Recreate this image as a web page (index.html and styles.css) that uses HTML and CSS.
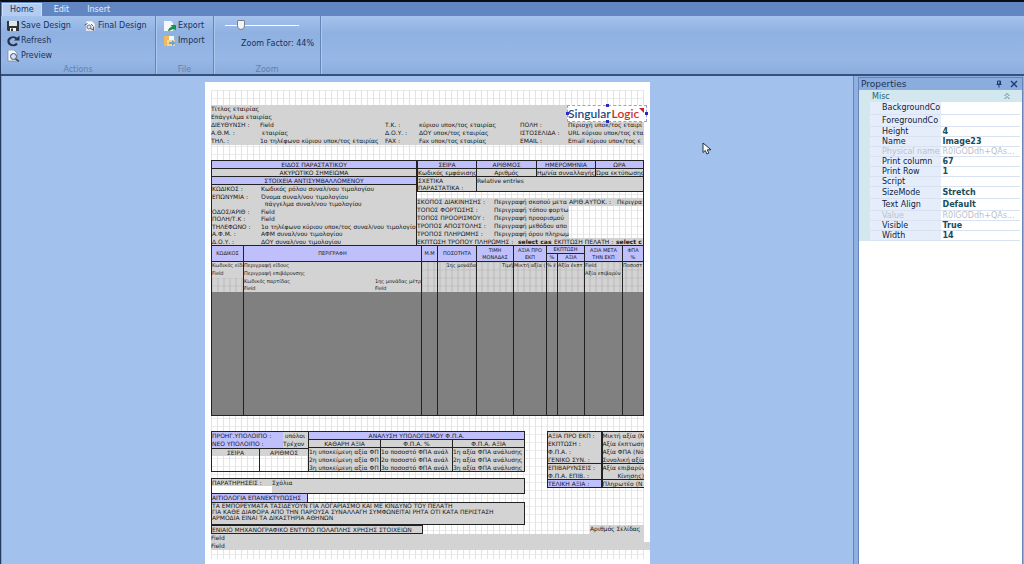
FILE: index.html
```html
<!DOCTYPE html>
<html lang="el">
<head>
<meta charset="utf-8">
<title>Report Designer</title>
<link rel="stylesheet" href="styles.css">
</head>
<body>
<div class="app">
  <nav class="tabs" lang="en">
    <button class="tab active">Home</button>
    <button class="tab">Edit</button>
    <button class="tab">Insert</button>
  </nav>
  <header class="ribbon" lang="en">
    <section class="group actions">
      <div class="group-body action-grid">
        <button class="cmd"><svg viewBox="0 0 14 12"><path d="M1 1h12v10H2L1 10z" fill="#30343c"/><path d="M3 1h8v5H3z" fill="#dfe9df"/><path d="M4 8h6v3H4z" fill="#f4f6f8"/><path d="M5 8.500h2V11H5z" fill="#30343c"/></svg>Save Design</button>
        <button class="cmd"><svg viewBox="0 0 14 12"><path d="M3 1h6l3 3v7H3z" fill="#f7f9fc" stroke="#a9b4c6" stroke-width=".6"/><path d="M1.500 5l3-1.500M8 4l2 2" fill="none" stroke="#53627d"/><circle cx="6" cy="7" r="2" fill="#dfe6f0" stroke="#64738e"/><path d="M7.500 8.500l3 1.500V6.500" fill="none" stroke="#53627d" stroke-width="1.200"/></svg>Final Design</button>
        <button class="cmd wide"><svg viewBox="0 0 14 12"><path d="M11 8.500A4.700 4 0 1 1 10.500 3.500" fill="none" stroke="#273246" stroke-width="2.200"/><path d="M8 5.500h5.500V.5z" fill="#273246"/></svg>Refresh</button>
        <button class="cmd wide"><svg viewBox="0 0 14 12"><path d="M2 0h6l3 3v8H2z" fill="#f7f9fc" stroke="#75839b" stroke-width=".7"/><circle cx="7.500" cy="6.500" r="3" fill="#cfe2f7" stroke="#3f4f6a"/><path d="M9.500 8.800l3.500 2.700" stroke="#3f4f6a" stroke-width="1.600"/></svg>Preview</button>
      </div>
      <h2>Actions</h2>
    </section>
    <section class="group file">
      <div class="group-body">
        <button class="cmd"><svg viewBox="0 0 14 12"><path d="M1 1h7l2 2v8H1z" fill="#f4f8fc"/><path d="M5 11c0-2 2-4 4-4.500L7.500 5H13v5.500L11.500 9C9 9 7 11 5 11z" fill="#17924a"/></svg>Export</button>
        <button class="cmd"><svg viewBox="0 0 14 12"><path d="M1 1h5l1 2v8H1z" fill="#f1b95a"/><path d="M6 1h5v7H6z" fill="#f5f8fb"/><path d="M4 5h8v6H4z" fill="#f6d890"/><path d="M6 7h3V5l4 3-4 3V9H6z" fill="#6ea3dc"/></svg>Import</button>
      </div>
      <h2>File</h2>
    </section>
    <section class="group zoom">
      <div class="group-body">
        <input class="slider" type="range" id="zoom" min="0" max="200" value="36">
        <label class="factor" for="zoom">Zoom Factor: 44%</label>
      </div>
      <h2>Zoom</h2>
    </section>
  </header>

  <div class="workspace">
    <main class="canvas">
      <article class="page">
        <div class="sheet">
          <section class="company">
            <p class="full">Τίτλος εταιρίας</p>
            <p class="full">Επάγγελμα εταιρίας</p>
            <p>ΔΙΕΥΘΥΝΣΗ :</p><p>Field</p><p>Τ.Κ. :</p><p>κύριου υποκ/τος εταιρίας</p><p>ΠΟΛΗ :</p><p>Περιοχή υποκ/τος εταιρί</p>
            <p>Α.Θ.Μ. :</p><p>&nbsp;εταιρίας</p><p>Δ.Ο.Υ. :</p><p>ΔΟΥ υποκ/τος εταιρίας</p><p>ΙΣΤΟΣΕΛΙΔΑ :</p><p>URL κύριου υποκ/τος ετα</p>
            <p>ΤΗΛ. :</p><p>1ο τηλέφωνο κύριου υποκ/τος εταιρίας</p><p>FAX :</p><p>Fax υποκ/τος εταιρίας</p><p>EMAIL :</p><p>Email κύριου υποκ/τος ε</p>
            <div class="logo"><span class="blue">Singular</span><span class="red">Logic</span><svg class="flag" viewBox="0 0 5 5"><path d="M0 0h5v5z" fill="#c8242b"/></svg><i class="grip left"></i><i class="grip right"></i><i class="grip top"></i><i class="grip bottom"></i></div>
          </section>

          <section class="document">
            <div class="party">
              <p class="cell lilac">ΕΙΔΟΣ ΠΑΡΑΣΤΑΤΙΚΟΥ</p>
              <p class="cell">ΑΚΥΡΩΤΙΚΟ ΣΗΜΕΙΩΜΑ</p>
              <p class="cell lilac">ΣΤΟΙΧΕΙΑ ΑΝΤΙΣΥΜΒΑΛΛΟΜΕΝΟΥ</p>
              <div class="pairs">
                <p>ΚΩΔΙΚΟΣ :</p><p>Κωδικός ρόλου συναλ/νου τιμολογίου</p>
                <p>ΕΠΩΝΥΜΙΑ :</p><p>Όνομα συναλ/νου τιμολογίου</p>
                <p></p><p>&nbsp;&nbsp;πάγγελμα συναλ/νου τιμολογίου</p>
                <p>ΟΔΟΣ/ΑΡΙΘ :</p><p>Field</p>
                <p>ΠΟΛΗ/Τ.Κ :</p><p>Field</p>
                <p>ΤΗΛΕΦΩΝΟ :</p><p>1ο τηλέφωνο κύριου υποκ/τος συναλ/νου τιμολογίο</p>
                <p>Α.Φ.Μ. :</p><p>ΑΦΜ συναλ/νου τιμολογίου</p>
                <p>Δ.Ο.Υ. :</p><p>ΔΟΥ συναλ/νου τιμολογίου</p>
              </div>
            </div>
            <div class="details">
              <div class="series">
                <p class="cell lilac">ΣΕΙΡΑ</p><p class="cell lilac">ΑΡΙΘΜΟΣ</p><p class="cell lilac">ΗΜΕΡΟΜΗΝΙΑ</p><p class="cell lilac">ΩΡΑ</p>
                <p class="cell">Κωδικός εμφάνισης</p><p class="cell">Αριθμός</p><p class="cell">Ημ/νία συναλλαγής</p><p class="cell">Ώρα εκτύπωσης</p>
                <p class="cell related">ΣΧΕΤΙΚΑ<br>ΠΑΡΑΣΤΑΤΙΚΑ :</p><p class="cell related entries">Relative entries</p>
              </div>
              <div class="shipping">
                <p>ΣΚΟΠΟΣ ΔΙΑΚΙΝΗΣΗΣ :</p><p>Περιγραφή σκοπού μετα</p><p>ΑΡΙΘ.ΑΥΤΟΚ. :</p><p>Περιγρα</p>
                <p>ΤΟΠΟΣ ΦΟΡΤΩΣΗΣ :</p><p>Περιγραφή τόπου φορτω</p>
                <p class="start">ΤΟΠΟΣ ΠΡΟΟΡΙΣΜΟΥ :</p><p>Περιγραφή προορισμού</p>
                <p class="start">ΤΡΟΠΟΣ ΑΠΟΣΤΟΛΗΣ :</p><p>Περιγραφή μεθόδου απο</p>
                <p class="start">ΤΡΟΠΟΣ ΠΛΗΡΩΜΗΣ :</p><p>Περιγραφή όρου πληρωμ</p>
              </div>
              <div class="discounts"><p>ΕΚΠΤΩΣΗ ΤΡΟΠΟΥ ΠΛΗΡΩΜΗΣ :</p><p class="bold">select cas</p><p>ΕΚΠΤΩΣΗ ΠΕΛΑΤΗ :</p><p class="bold">select c</p></div>
            </div>
          </section>

          <table class="items">
            <colgroup><col class="c-code"><col><col class="c-unit"><col class="c-qty"><col class="c-price"><col class="c-net"><col class="c-pct"><col class="c-disc"><col class="c-after"><col class="c-vat"></colgroup>
            <thead>
              <tr><th rowspan="2">ΚΩΔΙΚΟΣ</th><th rowspan="2">ΠΕΡΙΓΡΑΦΗ</th><th rowspan="2">Μ.Μ</th><th rowspan="2">ΠΟΣΟΤΗΤΑ</th><th rowspan="2">ΤΙΜΗ<br>ΜΟΝΑΔΑΣ</th><th rowspan="2">ΑΞΙΑ ΠΡΟ<br>ΕΚΠ</th><th colspan="2">ΕΚΠΤΩΣΗ</th><th rowspan="2">ΑΞΙΑ ΜΕΤΑ<br>ΤΗΝ ΕΚΠ</th><th rowspan="2">ΦΠΑ<br>%</th></tr>
              <tr><th>%</th><th>ΑΞΙΑ</th></tr>
            </thead>
            <tbody>
              <tr><td class="plain">Κωδικός είδο</td><td class="plain">Περιγραφή είδους</td><td></td><td class="end">1ης μονάδα</td><td class="end">Τιμή</td><td>Μικτή αξία (</td><td>% έ</td><td>Αξία έκπτ</td><td>Field</td><td>Ποσοστ</td></tr>
              <tr><td class="plain">Field</td><td class="plain">Περιγραφή επιβάρυνσης</td><td></td><td></td><td></td><td></td><td></td><td></td><td>Αξία επιβαρύν</td><td></td></tr>
              <tr class="low"><td></td><td class="plain"><div class="split"><span>Κωδικός παρτίδας</span><span>1ης μονάδας μέτρ</span></div></td><td></td><td></td><td></td><td></td><td></td><td></td><td></td><td></td></tr>
              <tr class="low"><td></td><td class="plain"><div class="split"><span>Field</span><span>Field</span></div></td><td></td><td></td><td></td><td></td><td></td><td></td><td></td><td></td></tr>
              <tr class="void"><td></td><td></td><td></td><td></td><td></td><td></td><td></td><td></td><td></td><td></td></tr>
            </tbody>
          </table>

          <section class="footer">
            <div class="summary">
              <div class="balances">
                <div class="balance">
                  <p>ΠΡΟΗΓ.ΥΠΟΛΟΙΠΟ :</p><p class="gray">&nbsp;υπόλοι</p>
                  <p>ΝΕΟ ΥΠΟΛΟΙΠΟ :</p><p class="gray">Τρέχον</p>
                </div>
                <div class="numbering"><p class="cell top">ΣΕΙΡΑ</p><p class="cell top">ΑΡΙΘΜΟΣ</p><p class="cell empty"></p><p class="cell empty"></p></div>
              </div>
              <table class="vat">
                <thead><tr><th colspan="3" class="lilac">ΑΝΑΛΥΣΗ ΥΠΟΛΟΓΙΣΜΟΥ Φ.Π.Α.</th></tr>
                <tr><th>ΚΑΘΑΡΗ ΑΞΙΑ</th><th>Φ.Π.Α. %</th><th>Φ.Π.Α. ΑΞΙΑ</th></tr></thead>
                <tbody>
                <tr><td>1η υποκείμενη αξία ΦΠ</td><td>1ο ποσοστό ΦΠΑ ανάλ</td><td>1η αξία ΦΠΑ ανάλυσης</td></tr>
                <tr><td>2η υποκείμενη αξία ΦΠ</td><td>2ο ποσοστό ΦΠΑ ανάλ</td><td>2η αξία ΦΠΑ ανάλυσης</td></tr>
                <tr><td>3η υποκείμενη αξία ΦΠ</td><td>3ο ποσοστό ΦΠΑ ανάλ</td><td>3η αξία ΦΠΑ ανάλυσης</td></tr>
                </tbody>
              </table>
              <div class="remarks"><p>ΠΑΡΑΤΗΡΗΣΕΙΣ :</p><p>Σχόλια</p><p class="blank"></p></div>
              <p class="cell lilac reason">ΑΙΤΙΟΛΟΓΙΑ ΕΠΑΝΕΚΤΥΠΩΣΗΣ</p>
              <p class="terms">ΤΑ ΕΜΠΟΡΕΥΜΑΤΑ ΤΑΣΙΔΕΥΟΥΝ ΓΙΑ ΛΟΓΑΡΙΑΣΜΟ ΚΑΙ ΜΕ ΚΙΝΔΥΝΟ ΤΟΥ ΠΕΛΑΤΗ<br>ΓΙΑ ΚΑΘΕ ΔΙΑΦΟΡΑ ΑΠΟ ΤΗΝ ΠΑΡΟΥΣΑ ΣΥΝΑΛΛΑΓΗ ΣΥΜΦΩΝΕΙΤΑΙ ΡΗΤΑ ΟΤΙ ΚΑΤΑ ΠΕΡΙΣΤΑΣΗ<br>ΑΡΜΟΔΙΑ ΕΙΝΑΙ ΤΑ ΔΙΚΑΣΤΗΡΙΑ ΑΘΗΝΩΝ</p>
            </div>
            <table class="totals">
              <tr><th>ΑΞΙΑ ΠΡΟ ΕΚΠ :</th><td>Μικτή αξία (Ν</td></tr>
              <tr><th>ΕΚΠΤΩΣΗ :</th><td>Αξία έκπτωση</td></tr>
              <tr><th>Φ.Π.Α. :</th><td>Αξία ΦΠΑ (Νό</td></tr>
              <tr><th>ΓΕΝΙΚΟ ΣΥΝ. :</th><td>Συνολική αξία</td></tr>
              <tr class="rule"><th>ΕΠΙΒΑΡΥΝΣΕΙΣ :</th><td>Αξία επιβαρύν</td></tr>
              <tr><th>Φ.Π.Α. ΕΠΙΒ. :</th><td class="end">Κίνησης)</td></tr>
              <tr class="rule"><th class="lilac">ΤΕΛΙΚΗ ΑΞΙΑ :</th><td>Πληρωτέο (Ν</td></tr>
            </table>
          </section>
          <div class="form-line"><p class="cell form">ΕΝΙΑΙΟ ΜΗΧΑΝΟΓΡΑΦΙΚΟ ΕΝΤΥΠΟ ΠΟΛΑΠΛΗΣ ΧΡΗΣΗΣ ΣΤΟΙΧΕΙΩΝ</p><p class="page-no">Αριθμός Σελίδας</p></div>
          <p class="band">Field</p>
          <p class="band bleed">Field</p>
        </div>
      </article>
      <svg class="pointer" viewBox="0 0 10 13"><path d="M1 1v9.500l2.300-2 1.600 3.500 1.900-.9-1.500-3.300H9z" fill="#fff" stroke="#26303f"/></svg>
    </main>

    <aside class="properties" lang="en">
      <div class="panel-title"><h1>Properties</h1>
        <button aria-label="Pin"><svg viewBox="0 0 8 8"><path d="M2.500 1h3v3h-3zM1.500 4.500h5M4 5v2.500M5 1v3" fill="none" stroke="#1d3a6e"/></svg></button>
        <button aria-label="Close"><svg viewBox="0 0 8 8"><path d="M1 1l6 6M7 1L1 7" stroke="#1d3a6e" stroke-width="1.400"/></svg></button>
      </div>
      <div class="category"><span>Misc</span><svg viewBox="0 0 8 8"><path d="M1.500 4L4 1.500 6.500 4M1.500 7L4 4.500 6.500 7" fill="none" stroke="#5b8a98"/></svg></div>
      <table class="props">
        <tr class="tall"><th>BackgroundCo</th><td></td></tr>
        <tr class="tall"><th>ForegroundCo</th><td></td></tr>
        <tr><th>Height</th><td>4</td></tr>
        <tr><th>Name</th><td>Image23</td></tr>
        <tr class="off"><th>Physical name</th><td>R0lGODdh+QAs...</td></tr>
        <tr><th>Print column</th><td>67</td></tr>
        <tr><th>Print Row</th><td>1</td></tr>
        <tr><th>Script</th><td></td></tr>
        <tr class="tall"><th>SizeMode</th><td>Stretch</td></tr>
        <tr class="tall"><th>Text Align</th><td>Default</td></tr>
        <tr><th class="off">Value</th><td class="off">R0lGODdh+QAs...</td></tr>
        <tr><th>Visible</th><td>True</td></tr>
        <tr><th>Width</th><td>14</td></tr>
      </table>
    </aside>
  </div>
</div>
</body>
</html>
```
FILE: styles.css
```css
* { box-sizing: border-box; }
body { margin: 0; font-family: "DejaVu Sans", sans-serif; font-size: 8px; color: #1c3158; background: #a2c1ec; }
p, h1, h2 { margin: 0; font-weight: normal; }
button { font: inherit; color: inherit; background: none; border: 0; padding: 0; }
table { border-collapse: collapse; table-layout: fixed; width: 100%; }
th, td { padding: 0; font-weight: normal; white-space: nowrap; overflow: hidden; }

.app { min-height: 100vh; display: flex; flex-direction: column; border-top: 2px solid #0a0d14; border-left: 1px solid #26395e; }
.tabs { display: flex; height: 14px; padding-top: 1px; background: #6286c1; }
.tab { padding: 0 9px; color: #e4eefc; line-height: 13px; }
.tab.active { padding: 0 7px; margin: 0 3px 0 1px; color: #1c3158; background: #b3cdf2; border: 1px solid #cfe0f8; border-bottom: 0; line-height: 12px; }

.ribbon { display: flex; height: 60px; background: linear-gradient(#a5c2ec, #8fb1e1 30%, #96b7e6 75%, #8baddd); border-bottom: 2px solid #37517f; }
.group { display: flex; flex-direction: column; border-right: 1px solid #6585b8; box-shadow: 1px 0 #acc8ef; }
.group-body { flex: 1; padding-top: 2px; }
.group h2 { font-size: 8px; line-height: 9px; text-align: center; color: #6480ad; }
.actions { width: 155px; }
.file { width: 58px; }
.zoom { width: 107px; }
.action-grid { display: grid; grid-template-columns: 77px 1fr; align-content: start; padding-left: 5px; }
.file .group-body { padding-left: 7px; }
.cmd { display: flex; align-items: center; gap: 1px; height: 15px; white-space: nowrap; line-height: 15px; }
.cmd svg { width: 14px; height: 12px; }
.wide { grid-column: 1 / -1; }
.zoom .group-body { display: flex; flex-direction: column; padding: 3px 6px 0 11px; }
.slider { appearance: none; width: 74px; height: 12px; margin: 0; background: linear-gradient(#fff, #fff) center / 100% 1px no-repeat; }
.slider::-webkit-slider-thumb { appearance: none; width: 8px; height: 10px; background: #f3f4f5; border: 1px solid #747f90; border-radius: 1px 1px 4px 4px; }
.factor { margin-top: 7px; line-height: 12px; text-align: right; }

.workspace { flex: 1; display: flex; background: #8eb0e2; }
.canvas { position: relative; flex: 1; display: flex; justify-content: center; align-items: flex-start; padding-top: 6px; background: #a2c1ec; border-left: 1px solid #7d9fd2; border-right: 1px solid #6585b8; }
.page { width: 445px; padding: 8px 6px 7px; background: #fff; color: #181818; font-size: 6px; line-height: 8px; }
.sheet { padding: 15px 0 9px; background: linear-gradient(90deg, #e3e3e3 1px, transparent 1px) 0 0 / 6px 8px, linear-gradient(#ebebeb 1px, transparent 1px) 0 0 / 6px 8px; }
.sheet p { white-space: nowrap; overflow: hidden; }
.pointer { position: absolute; left: 700px; top: 66px; width: 10px; height: 13px; }

.company { position: relative; display: grid; grid-template-columns: 49px 125px 34px 101px 48px 1fr; background: #d3d3d3; }
.full { grid-column: 1 / -1; }
.logo { position: absolute; right: -3px; top: 0; width: 80px; height: 17px; display: flex; align-items: center; background: #fff; border: 1px dashed #9a9ae8; font: 600 12px/16px Lato, sans-serif; }
.blue { color: #1b4a86; }
.red { color: #c8352f; margin-left: 1px; }
.flag { width: 5px; height: 5px; flex: none; align-self: flex-start; margin-top: 2px; }
.grip { position: absolute; width: 3px; height: 3px; background: #2929c8; }
.grip.left { left: -2px; top: 6px; }
.grip.right { right: -2px; top: 6px; }
.grip.top { left: 38px; top: -2px; }
.grip.bottom { left: 38px; bottom: -2px; }

.cell { background: #d3d3d3; border: solid #222; border-width: 1px 0 0 1px; text-align: center; line-height: 7px; height: 8px; }
.lilac { background: #bfbffb; }
.document { display: grid; grid-template-columns: 206px 1fr; margin-top: 15px; }
.party { display: flex; flex-direction: column; border-right: 1px solid #222; }
.pairs { flex: 1; display: grid; grid-template-columns: 49px 1fr; background: #d3d3d3; border: solid #222; border-width: 1px 0 0 1px; line-height: 7px; }
.details { min-width: 0; border-right: 1px solid #222; }
.series { display: grid; grid-template-columns: 59px 60px 59px 1fr; border-bottom: 1px solid #222; }
.related { height: 15px; text-align: left; line-height: 7px; }
.entries { grid-column: span 3; }
.shipping { display: grid; grid-template-columns: 77px 75px 48px 1fr; margin-top: 6px; }
.shipping p { background: #d3d3d3; }
.start { grid-column: 1; }
.discounts { display: grid; grid-template-columns: 101px 36px 62px 1fr; background: #d3d3d3; line-height: 7px; }
.bold { font-weight: bold; }

.items { border: 1px solid #222; background: linear-gradient(90deg, #b9b9b9 1px, transparent 1px) 0 0 / 6px 8px, linear-gradient(#c3c3c3 1px, transparent 1px) 0 0 / 6px 8px, #d3d3d3; }
.items th { background: #bfbffb; border: 1px solid #222; font-size: 5px; line-height: 7px; height: 8px; text-align: center; }
.items td { height: 8px; line-height: 7px; font-size: 5px; border-left: 1px solid #222; }
.items .plain { background: #d3d3d3; }
.items .low td { height: 7px; }
.items .end, .totals .end { text-align: right; }
.items .void td { height: 124px; background: #808080; }
.split { display: grid; grid-template-columns: 131px 1fr; }
.c-code { width: 32px; } .c-unit { width: 16px; } .c-qty { width: 39px; } .c-price { width: 37px; } .c-net { width: 33px; }
.c-pct { width: 11px; } .c-disc { width: 27px; } .c-after { width: 38px; } .c-vat { width: 21px; }

.footer { display: grid; grid-template-columns: 314px 97px; justify-content: space-between; align-items: start; margin-top: 15px; }
.summary { display: grid; grid-template-columns: 97px 217px; }
.balances { display: flex; flex-direction: column; }
.balance { display: grid; grid-template-columns: 71px 1fr; background: #bfbffb; border: solid #222; border-width: 1px 0 0 1px; line-height: 8px; }
.gray { background: #d3d3d3; }
.numbering { flex: 1; display: grid; grid-template: 8px 1fr / 48px 1fr; border-bottom: 1px solid #222; }
.empty { height: auto; border-top: 0; background: none; }
.vat th, .vat td { height: 8px; line-height: 7px; border: 1px solid #222; border-width: 0 1px; background: #d3d3d3; }
.vat th { border-width: 1px; }
.vat .lilac, .totals .lilac { background: #bfbffb; }
.vat { border-bottom: 1px solid #222; }
.remarks { grid-column: 1 / -1; display: grid; grid-template: 7px 7px / 60px 1fr; line-height: 7px; margin-top: 6px; background: #d3d3d3; border: 1px solid #222; }
.blank { background: #fff; }
.reason { border-right-width: 1px; border-top: 0; text-align: left; }
.terms { grid-column: 1 / -1; line-height: 6px; padding-bottom: 3px; background: #d3d3d3; border: 1px solid #222; }
.totals { border: 1px solid #222; border-right: 0; background: #d3d3d3; }
.totals th { width: 54px; text-align: left; border-right: 2px solid #222; }
.totals th, .totals td { height: 8px; line-height: 7px; }
.rule { border-top: 1px solid #222; }
.form-line { display: flex; justify-content: space-between; }
.form { width: 212px; height: 9px; border-width: 1px; text-align: left; }
.page-no { width: 54px; background: #d3d3d3; }
.band { background: #d3d3d3; }
.bleed { margin-right: -6px; }

.properties { width: 165px; margin: 1px 1px 0 4px; background: #fff; border: 1px solid #6585b8; }
.panel-title { display: flex; align-items: center; gap: 7px; height: 12px; padding: 0 4px 0 2px; background: #8badde; }
.panel-title h1 { flex: 1; font-size: 9px; line-height: 12px; }
.panel-title svg, .category svg { display: block; width: 8px; height: 8px; }
.category { display: flex; justify-content: space-between; align-items: center; height: 12px; padding: 0 11px 0 13px; background: #d2e8ee; color: #246071; }
.props { width: calc(100% - 2px); border-left: 11px solid #d2e8ee; border-bottom: 1px solid #c8d6ea; color: #10233c; }
.props th, .props td { height: 10px; line-height: 9px; border-bottom: 1px solid #d9e2f0; }
.props th { width: 76px; padding-left: 12px; text-align: left; background: #e5edfb; }
.props td { padding-left: 2px; color: #164d59; font-weight: bold; }
.props .tall th, .props .tall td { height: 12px; line-height: 11px; }
.props .off th, .props .off td, .props .off { color: #bcc1c9; font-weight: normal; }
```
